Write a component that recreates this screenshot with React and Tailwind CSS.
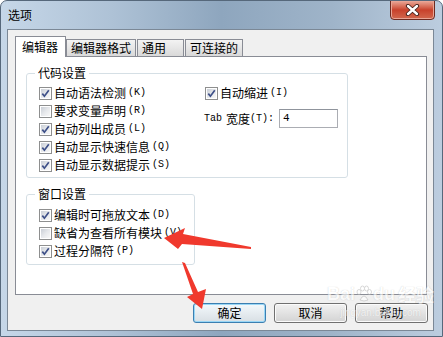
import React from "react";

// 复选框（Win7 风格）
const Box = ({ checked }) => (
  <div className="w-[13px] h-[13px] shrink-0 border border-[#8e8f8f] bg-white p-[1px]">
    <div className="w-full h-full bg-gradient-to-br from-[#c9ced6] via-[#e6e8eb] to-[#f8f8f8] flex items-center justify-center">
      {checked && (
        <svg width="9" height="9" viewBox="0 0 9 9">
          <path d="M1.3 4.6 L3.4 7.2 L7.8 1.2" fill="none" stroke="#3f5189" strokeWidth="1.7" />
        </svg>
      )}
    </div>
  </div>
);

const Row = ({ checked, text, k }) => (
  <div className="flex items-center h-[18px]">
    <Box checked={checked} />
    <span className="ml-[2px] leading-[18px]">{text}</span>
    <span className="ml-[2px] font-['Liberation_Mono',monospace] text-[10px] leading-[18px]">({k})</span>
  </div>
);

const Tab = ({ label, width, active }) =>
  active ? (
    <div
      className="relative z-10 -mb-px h-[21px] bg-white border border-b-0 border-[#898c95] pl-[6px] leading-[19px]"
      style={{ width }}
    >
      {label}
    </div>
  ) : (
    <div
      className="h-[17px] bg-gradient-to-b from-[#f3f3f3] to-[#d9d9d9] border border-b-0 border-[#898c95] pl-[4px] leading-[16px]"
      style={{ width }}
    >
      {label}
    </div>
  );

const Button = ({ label, primary }) => (
  <div
    className={
      "w-[73px] h-[20px] rounded-[3px] border flex items-center justify-center leading-[18px] " +
      (primary
        ? "border-[#3c7fb1] shadow-[inset_0_0_0_1px_#9ad7f6] bg-gradient-to-b from-[#f4f9fc] to-[#d8dfe4]"
        : "border-[#707070] shadow-[inset_0_0_0_1px_#fbfbfb] bg-gradient-to-b from-[#f2f2f2] to-[#d3d3d3]")
    }
  >
    {label}
  </div>
);

export default function App() {
  return (
    <div className="relative w-[443px] h-[337px] overflow-hidden rounded-t-[7px] border border-[#56687b] bg-[linear-gradient(90deg,#c6d7e8_0%,#aec2d6_25%,#8ea6be_50%,#9fb4c9_75%,#bccddf_100%)] pl-[6px] pr-[7px] flex flex-col font-['Noto_Sans_CJK_SC',sans-serif] text-[12px] text-black">
      {/* 标题栏 */}
      <div className="h-[28px] flex items-start justify-between">
        <span className="ml-[1px] mt-[6px] leading-[16px]">选项</span>
        <div className="w-[45px] h-[20px] -mt-px rounded-b-[4px] border border-[#6e2a20] bg-gradient-to-b from-[#e9a898] via-[#c8412b] to-[#d2674d] shadow-[inset_0_0_0_1px_#e9a595] flex items-center justify-center">
          <svg width="15" height="12" viewBox="0 0 15 12">
            <path d="M3 2 L12 10 M12 2 L3 10" stroke="#43201a" strokeWidth="4.2" strokeLinecap="round" />
            <path d="M3 2 L12 10 M12 2 L3 10" stroke="#ffffff" strokeWidth="2.4" strokeLinecap="round" />
          </svg>
        </div>
      </div>

      {/* 客户区 */}
      <div className="w-[427px] h-[302px] border border-[#7b8896] bg-[#f0f0f0] pl-[7px] pt-[6px]">
        <div className="flex items-end h-[20px]">
          <Tab label="编辑器" width={51} active />
          <Tab label="编辑器格式" width={70} />
          <div className="w-[1px]" />
          <Tab label="通用" width={47} />
          <div className="w-[1px]" />
          <Tab label="可连接的" width={58} />
        </div>

        <div className="w-[412px] h-[239px] bg-white border border-[#898c95] pl-[10px] pt-[8px]">
          <fieldset className="w-[322px] h-[113px] border border-[#d5dfe5] rounded-[3px] pl-[12px]">
            <legend className="ml-[-4px] px-[3px] leading-[16px]">代码设置</legend>
            <div className="flex pt-[3px]">
              <div className="w-[166px]">
                <Row checked text="自动语法检测" k="K" />
                <Row text="要求变量声明" k="R" />
                <Row checked text="自动列出成员" k="L" />
                <Row checked text="自动显示快速信息" k="Q" />
                <Row checked text="自动显示数据提示" k="S" />
              </div>
              <div>
                <Row checked text="自动缩进" k="I" />
                <div className="flex items-center mt-[7px] -ml-px">
                  <span className="w-[75px] flex items-center leading-[19px]">
                    <span className="font-['Liberation_Mono',monospace] text-[10px]">Tab</span>
                    <span className="ml-[4px]">宽度</span>
                    <span className="font-['Liberation_Mono',monospace] text-[10px]">(T):</span>
                  </span>
                  <div className="w-[59px] h-[19px] border border-[#abadb3] border-t-[#8f949c] bg-white pl-[3px] font-['Liberation_Mono',monospace] text-[11px] leading-[17px]">
                    4
                  </div>
                </div>
              </div>
            </div>
          </fieldset>

          <fieldset className="mt-[8px] w-[169px] h-[79px] border border-[#d5dfe5] rounded-[3px] pl-[12px]">
            <legend className="ml-[-4px] px-[3px] leading-[16px]">窗口设置</legend>
            <div className="pt-[4px]">
              <Row checked text="编辑时可拖放文本" k="D" />
              <Row text="缺省为查看所有模块" k="V" />
              <Row checked text="过程分隔符" k="P" />
            </div>
          </fieldset>
        </div>

        <div className="w-[413px] mt-[8px] flex justify-end gap-[8px]">
          <Button label="确定" primary />
          <Button label="取消" />
          <Button label="帮助" />
        </div>
      </div>

      {/* 百度经验水印 */}
      <div className="absolute left-[326px] top-[284px] pointer-events-none flex flex-col items-center opacity-60">
        <div className="flex items-end font-['Liberation_Sans',sans-serif] font-bold text-[18px] leading-[18px] text-white [text-shadow:0_0_1px_#a8a8a8]">
          <span>Bai</span>
          <svg width="16" height="18" viewBox="0 0 16 18" className="mx-[1px]">
            <g fill="#ffffff" stroke="#b0b0b0" strokeWidth="0.8">
              <ellipse cx="3" cy="7" rx="2" ry="2.5" />
              <ellipse cx="6.5" cy="3.5" rx="2" ry="2.5" />
              <ellipse cx="10.5" cy="3.5" rx="2" ry="2.5" />
              <ellipse cx="13.5" cy="7" rx="2" ry="2.5" />
              <path d="M4 15 Q8 7 12 15 Q8 17 4 15 Z" />
            </g>
          </svg>
          <span>du</span>
          <span className="ml-[3px] font-['Noto_Sans_CJK_SC',sans-serif]">经验</span>
        </div>
        <span className="mt-[4px] font-['Liberation_Sans',sans-serif] text-[10px] leading-[11px] text-white [text-shadow:0_0_1px_#a8a8a8]">
          jingyan.baidu.com
        </span>
      </div>

      {/* 红色箭头标注 */}
      <svg className="absolute left-0 top-0 pointer-events-none" width="443" height="337" viewBox="0 0 443 337">
        <polygon
          points="163,237 184,227 182,233 250,246 250,248 181,243 177,248"
          fill="#f0392d"
        />
        <polygon
          points="181,261 184,262 197,291 205,288 201,308 186,296 192,293"
          fill="#f0392d"
        />
      </svg>
    </div>
  );
}
